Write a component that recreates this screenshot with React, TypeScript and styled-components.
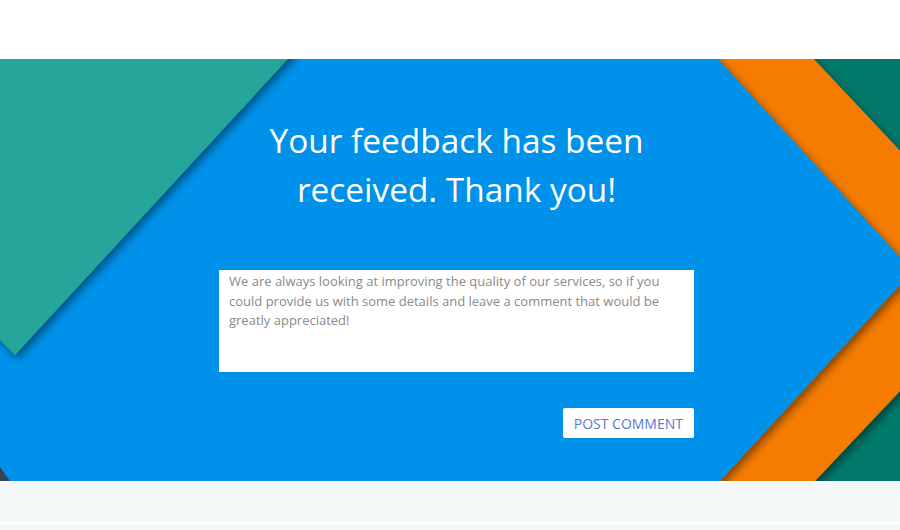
import React from 'react';
import styled, { createGlobalStyle } from 'styled-components';

const GlobalStyle = createGlobalStyle`
  html, body {
    margin: 0;
    padding: 0;
    background: #ffffff;
    font-family: 'Open Sans', 'Liberation Sans', sans-serif;
  }
  * {
    box-sizing: border-box;
  }
`;

const Page = styled.div`
  width: 900px;
  height: 530px;
  overflow: hidden;
  display: flex;
  flex-direction: column;
`;

const TopBar = styled.header`
  height: 59px;
  background: #ffffff;
  flex-shrink: 0;
`;

const Hero = styled.section`
  position: relative;
  height: 422px;
  flex-shrink: 0;
  background: #0091ea;
  overflow: hidden;
`;

const Backdrop = styled.svg`
  position: absolute;
  inset: 0;
  width: 100%;
  height: 100%;
`;

const Content = styled.div`
  position: relative;
  width: 475px;
  margin-left: 219px;
  padding-top: 57px;
  display: flex;
  flex-direction: column;
`;

const Title = styled.h1`
  margin: 0;
  padding: 0 10px;
  font-size: 33.4px;
  line-height: 49px;
  font-weight: 400;
  color: #ffffff;
  text-align: center;
`;

const CommentBox = styled.textarea`
  margin-top: 56px;
  width: 475px;
  height: 102px;
  border: none;
  border-radius: 0;
  outline: none;
  resize: none;
  padding: 2px 20px 0 10px;
  font-family: 'Open Sans', 'Liberation Sans', sans-serif;
  font-size: 13px;
  line-height: 19.5px;
  color: #555555;
  background: #ffffff;

  &::placeholder {
    color: #8a8a8a;
    opacity: 1;
  }
`;

const Actions = styled.div`
  margin-top: 36px;
  display: flex;
  justify-content: flex-end;
`;

const PostButton = styled.button`
  height: 30px;
  padding: 1px 11px 0;
  border: none;
  border-radius: 2px;
  background: #ffffff;
  color: #5a78d6;
  font-family: 'Open Sans', 'Liberation Sans', sans-serif;
  font-size: 14px;
  line-height: 29px;
  text-transform: uppercase;
  cursor: pointer;
`;

const Footer = styled.footer`
  margin-top: 2px;
  height: 41px;
  background: #f4f7f8;
  border-bottom: 2px solid #ffffff;
  flex-shrink: 0;
`;

const FooterRest = styled.div`
  flex: 1;
  background: #f4f7f8;
`;

const Shapes = () => (
  <Backdrop viewBox="0 0 900 422" preserveAspectRatio="none">
    <defs>
      <filter id="shade" x="-20%" y="-20%" width="140%" height="140%">
        <feDropShadow dx="3" dy="4" stdDeviation="4" floodColor="#000" floodOpacity="0.45" />
      </filter>
    </defs>
    <rect x="700" y="0" width="200" height="422" fill="#00796b" />
    <polygon
      points="680,-20 795,-20 920,113 920,311 815,422 796,442 680,442"
      fill="#f57c00"
      filter="url(#shade)"
    />
    <polygon
      points="-20,-20 699.6,-20 900,198 900,226 720,422 701.6,442 -20,442"
      fill="#0091ea"
      filter="url(#shade)"
    />
    <polygon points="0,408 10,422 0,422" fill="#3a4150" />
    <polygon points="-10,-10 297,-10 15,296 -10,271" fill="#26a69a" filter="url(#shade)" />
  </Backdrop>
);

const App = () => {
  return (
    <Page>
      <GlobalStyle />
      <TopBar />
      <Hero>
        <Shapes />
        <Content>
          <Title>Your feedback has been received. Thank you!</Title>
          <CommentBox placeholder="We are always looking at improving the quality of our services, so if you could provide us with some details and leave a comment that would be greatly appreciated!" />
          <Actions>
            <PostButton>Post Comment</PostButton>
          </Actions>
        </Content>
      </Hero>
      <Footer />
      <FooterRest />
    </Page>
  );
};

export default App;
